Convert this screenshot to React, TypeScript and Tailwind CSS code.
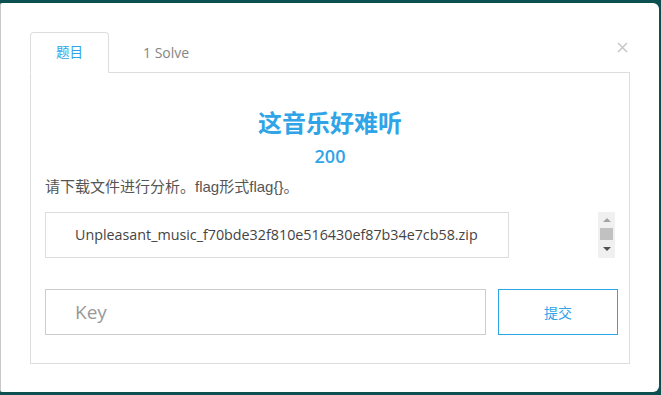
import React from "react";

const FONT = { fontFamily: '"Open Sans", "Noto Sans CJK SC", sans-serif' };
const LAT = { fontFamily: '"Liberation Sans", "Noto Sans CJK SC", sans-serif' };

export default function App() {
  return (
    <div className="w-[661px] h-[395px] bg-[#0c5052] pt-[3px] pb-[3px] pr-[2px]" style={FONT}>
      <div className="relative h-full bg-white rounded-r-[6px] rounded-l-[2px] border-l border-[#c8c8c8] pl-[29px] pt-[29px] pr-[29px]">
        <svg className="absolute right-[31px] top-[39px]" width="11" height="11" viewBox="0 0 11 11">
          <path d="M1 1 L10 10 M10 1 L1 10" stroke="#c8c8c8" strokeWidth="1.6" fill="none" />
        </svg>
        <div className="flex items-end h-[40px]">
          <div className="relative z-10 -mb-px h-[41px] w-[79px] flex items-center justify-center border border-[#dddddd] border-b-white bg-white rounded-t-[4px] text-[13.5px] text-[#2fa4e7]">
            题目
          </div>
          <div className="h-[40px] flex items-center pl-[34px] text-[14px] text-[#858585]">1 Solve</div>
        </div>
        <div className="h-[292px] border border-[#dddddd] pt-[34px] pl-[14px]">
          <div className="text-center text-[24px] leading-[32px] font-semibold text-[#2fa4e7] -ml-[14px]">这音乐好难听</div>
          <div className="text-center text-[18px] leading-[24px] font-semibold text-[#2fa4e7] mt-[5px] -ml-[14px]">200</div>
          <div className="h-[18px] text-[15px] leading-[18px] text-[#555555] mt-[9px] whitespace-nowrap">
            请下载文件进行分析。<span style={LAT}>flag</span>形式<span style={LAT}>flag{"{}"}</span>。
          </div>
          <div className="flex items-start mt-[17px]">
            <div className="w-[464px] h-[46px] border border-[#dddddd] flex items-center pl-[29px] text-[14.3px] text-[#444444] whitespace-nowrap">
              Unpleasant_music_f70bde32f810e516430ef87b34e7cb58.zip
            </div>
            <div className="ml-[89px] w-[17px] h-[46px] bg-[#f0f0f0] flex flex-col items-center">
              <div className="mt-[6px] w-0 h-0 border-l-[4px] border-r-[4px] border-b-[4px] border-l-transparent border-r-transparent border-b-[#a3a3a3]" />
              <div className="mt-[6px] w-[13px] h-[12px] bg-[#c1c1c1]" />
              <div className="mt-[7px] w-0 h-0 border-l-[4px] border-r-[4px] border-t-[4px] border-l-transparent border-r-transparent border-t-[#505050]" />
            </div>
          </div>
          <div className="flex mt-[31px] gap-[12px]">
            <div className="w-[441px] h-[46px] border border-[#cccccc] flex items-center pl-[29px] text-[19px] text-[#999999]">
              Key
            </div>
            <div className="w-[120px] h-[46px] border border-[#2fa4e7] flex items-center justify-center text-[14px] text-[#2fa4e7]">
              提交
            </div>
          </div>
        </div>
      </div>
    </div>
  );
}
